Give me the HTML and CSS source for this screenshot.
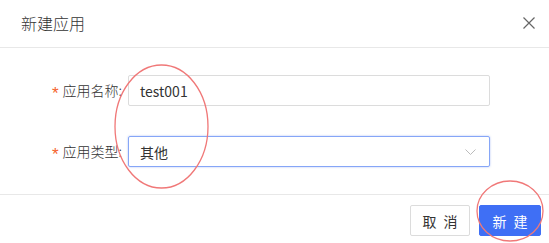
FILE: index.html
```html
<!DOCTYPE html>
<html lang="zh">
<head>
<meta charset="utf-8">
<link rel="stylesheet" href="styles.css">
</head>
<body>
<div class="modal">
  <div class="header">
    <div class="title">新建应用</div>
    <svg class="close" width="12" height="12" viewBox="0 0 12 12"><path d="M0.5 0.5L11.5 11.5M11.5 0.5L0.5 11.5" stroke="#666" stroke-width="1.2" fill="none"/></svg>
  </div>
  <div class="body">
    <div class="row">
      <label class="label"><span class="req">*</span>应用名称:</label>
      <div class="input">test001</div>
    </div>
    <div class="row">
      <label class="label"><span class="req">*</span>应用类型:</label>
      <div class="input select">其他
        <svg class="arrow" width="11" height="6" viewBox="0 0 11 6"><path d="M0.5 0.5L5.5 5.5L10.5 0.5" stroke="#bbb" stroke-width="1" fill="none"/></svg>
      </div>
    </div>
  </div>
  <div class="footer">
    <button class="btn">取 消</button>
    <button class="btn primary">新 建</button>
  </div>
  <svg class="marks" width="549" height="243" viewBox="0 0 549 243">
    <ellipse cx="161.5" cy="126.5" rx="46.5" ry="61.5" stroke="#f07878" stroke-width="1.3" fill="none"/>
    <ellipse cx="510" cy="211" rx="33" ry="30" stroke="#f07878" stroke-width="1.3" fill="none"/>
  </svg>
</div>
</body>
</html>
```
FILE: styles.css
```css
html, body {
  margin: 0;
  padding: 0;
  background: #fff;
}
.modal {
  position: relative;
  width: 549px;
  height: 243px;
  font-family: "Noto Sans CJK SC", "Noto Sans", sans-serif;
  color: #333;
  overflow: hidden;
}
.header {
  height: 48px;
  border-bottom: 1px solid #e8e8e8;
  display: flex;
  align-items: center;
  justify-content: space-between;
  padding: 0 14px 0 21px;
  box-sizing: border-box;
}
.title {
  font-size: 16px;
  font-weight: 300;
  color: #333;
  line-height: 1;
  margin-top: -2px;
}
.close {
  margin-top: -2px;
}
.body {
  padding: 27px 59px 27px 0;
  display: flex;
  flex-direction: column;
  gap: 30px;
  border-bottom: 1px solid #e8e8e8;
}
.row {
  display: flex;
  align-items: center;
}
.label {
  width: 122px;
  text-align: right;
  font-size: 14px;
  font-weight: 300;
  color: #333;
  margin-right: 6px;
}
.req {
  color: #f5622d;
  margin-right: 4px;
  font-size: 17px;
  font-weight: 400;
  vertical-align: -3px;
  line-height: 1;
  font-family: "Liberation Sans", sans-serif;
}
.input {
  flex: 1;
  height: 31px;
  box-sizing: border-box;
  border: 1px solid #dcdcdc;
  border-radius: 2px;
  padding-left: 11px;
  font-size: 14px;
  color: #333;
  display: flex;
  align-items: center;
  position: relative;
}
.select {
  border-color: #86a6f7;
  box-shadow: 0 0 2px rgba(80, 120, 240, 0.5);
}
.arrow {
  position: absolute;
  right: 13px;
  top: 12px;
}
.footer {
  display: flex;
  justify-content: flex-end;
  gap: 9px;
  padding: 10px 8px 0 0;
}
.btn {
  height: 31px;
  width: 60px;
  border: 1px solid #dcdcdc;
  background: #fff;
  border-radius: 2px;
  font-family: "Noto Sans CJK SC", sans-serif;
  font-size: 14px;
  color: #333;
  padding: 0;
  letter-spacing: 2px;
  text-indent: 2px;
}
.btn.primary {
  width: 62px;
  background: #3f6ff5;
  border-color: #3f6ff5;
  color: #fff;
}
.marks {
  position: absolute;
  left: 0;
  top: 0;
  pointer-events: none;
}
```
